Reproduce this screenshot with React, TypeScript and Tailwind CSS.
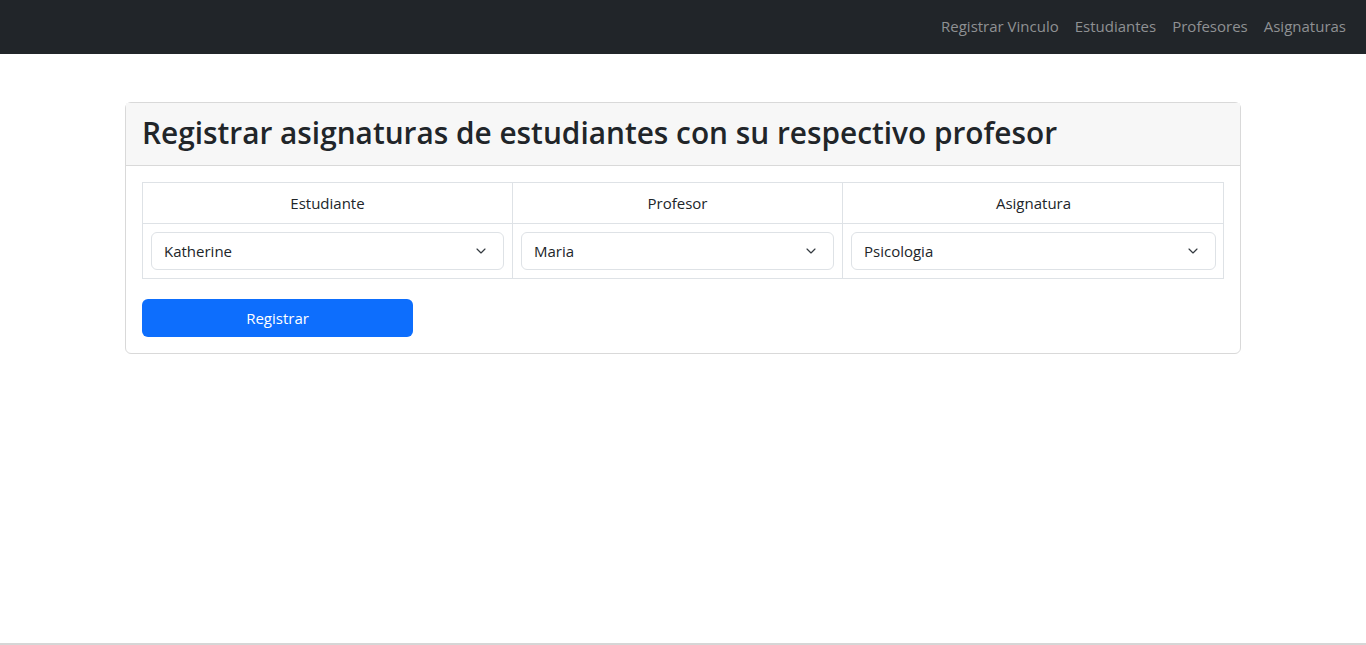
import { ChevronDown } from "lucide-react";

const font = { fontFamily: '"Open Sans", "Noto Sans", sans-serif' };

function Select({ value }: { value: string }) {
  return (
    <div className="flex h-[38px] w-full items-center justify-between rounded-[6px] border border-[#dee2e6] bg-white pl-3 pr-[14px] text-[15px] text-[#212529]">
      <span>{value}</span>
      <ChevronDown className="h-4 w-4 text-[#343a40]" strokeWidth={1.75} />
    </div>
  );
}

export default function App() {
  const links = ["Registrar Vinculo", "Estudiantes", "Profesores", "Asignaturas"];

  return (
    <div className="flex min-h-[645px] flex-col bg-white" style={font}>
      <nav className="flex h-[54px] items-center justify-end bg-[#212529] px-3 pb-[2px]">
        {links.map((l) => (
          <a key={l} className="px-2 text-[15px] text-[#8f9193]">
            {l}
          </a>
        ))}
      </nav>

      <main className="flex-1 pt-12">
        <div className="mx-auto w-[1116px] rounded-[6px] border border-[#d9d9d9]">
          <div className="border-b border-[#d9d9d9] bg-[#f7f7f7] px-4 pb-[13px] pt-[11px]">
            <h1 className="text-[29.8px] font-semibold leading-[38px] text-[#212529]">
              Registrar asignaturas de estudiantes con su respectivo profesor
            </h1>
          </div>

          <div className="p-4">
            <div className="grid grid-cols-[370px_330px_381px] border border-[#dee2e6] text-[15px] text-[#212529]">
              <div className="border-b border-r border-[#dee2e6] py-2 text-center leading-6">Estudiante</div>
              <div className="border-b border-r border-[#dee2e6] py-2 text-center leading-6">Profesor</div>
              <div className="border-b border-[#dee2e6] py-2 text-center leading-6">Asignatura</div>
              <div className="border-r border-[#dee2e6] p-2">
                <Select value="Katherine" />
              </div>
              <div className="border-r border-[#dee2e6] p-2">
                <Select value="Maria" />
              </div>
              <div className="p-2">
                <Select value="Psicologia" />
              </div>
            </div>

            <button className="mt-[20px] h-[38px] w-[271px] rounded-[6px] bg-[#0d6efd] text-[15px] text-white">
              Registrar
            </button>
          </div>
        </div>
      </main>

      <div className="h-[2px] bg-[#d6d6d6]" />
    </div>
  );
}
